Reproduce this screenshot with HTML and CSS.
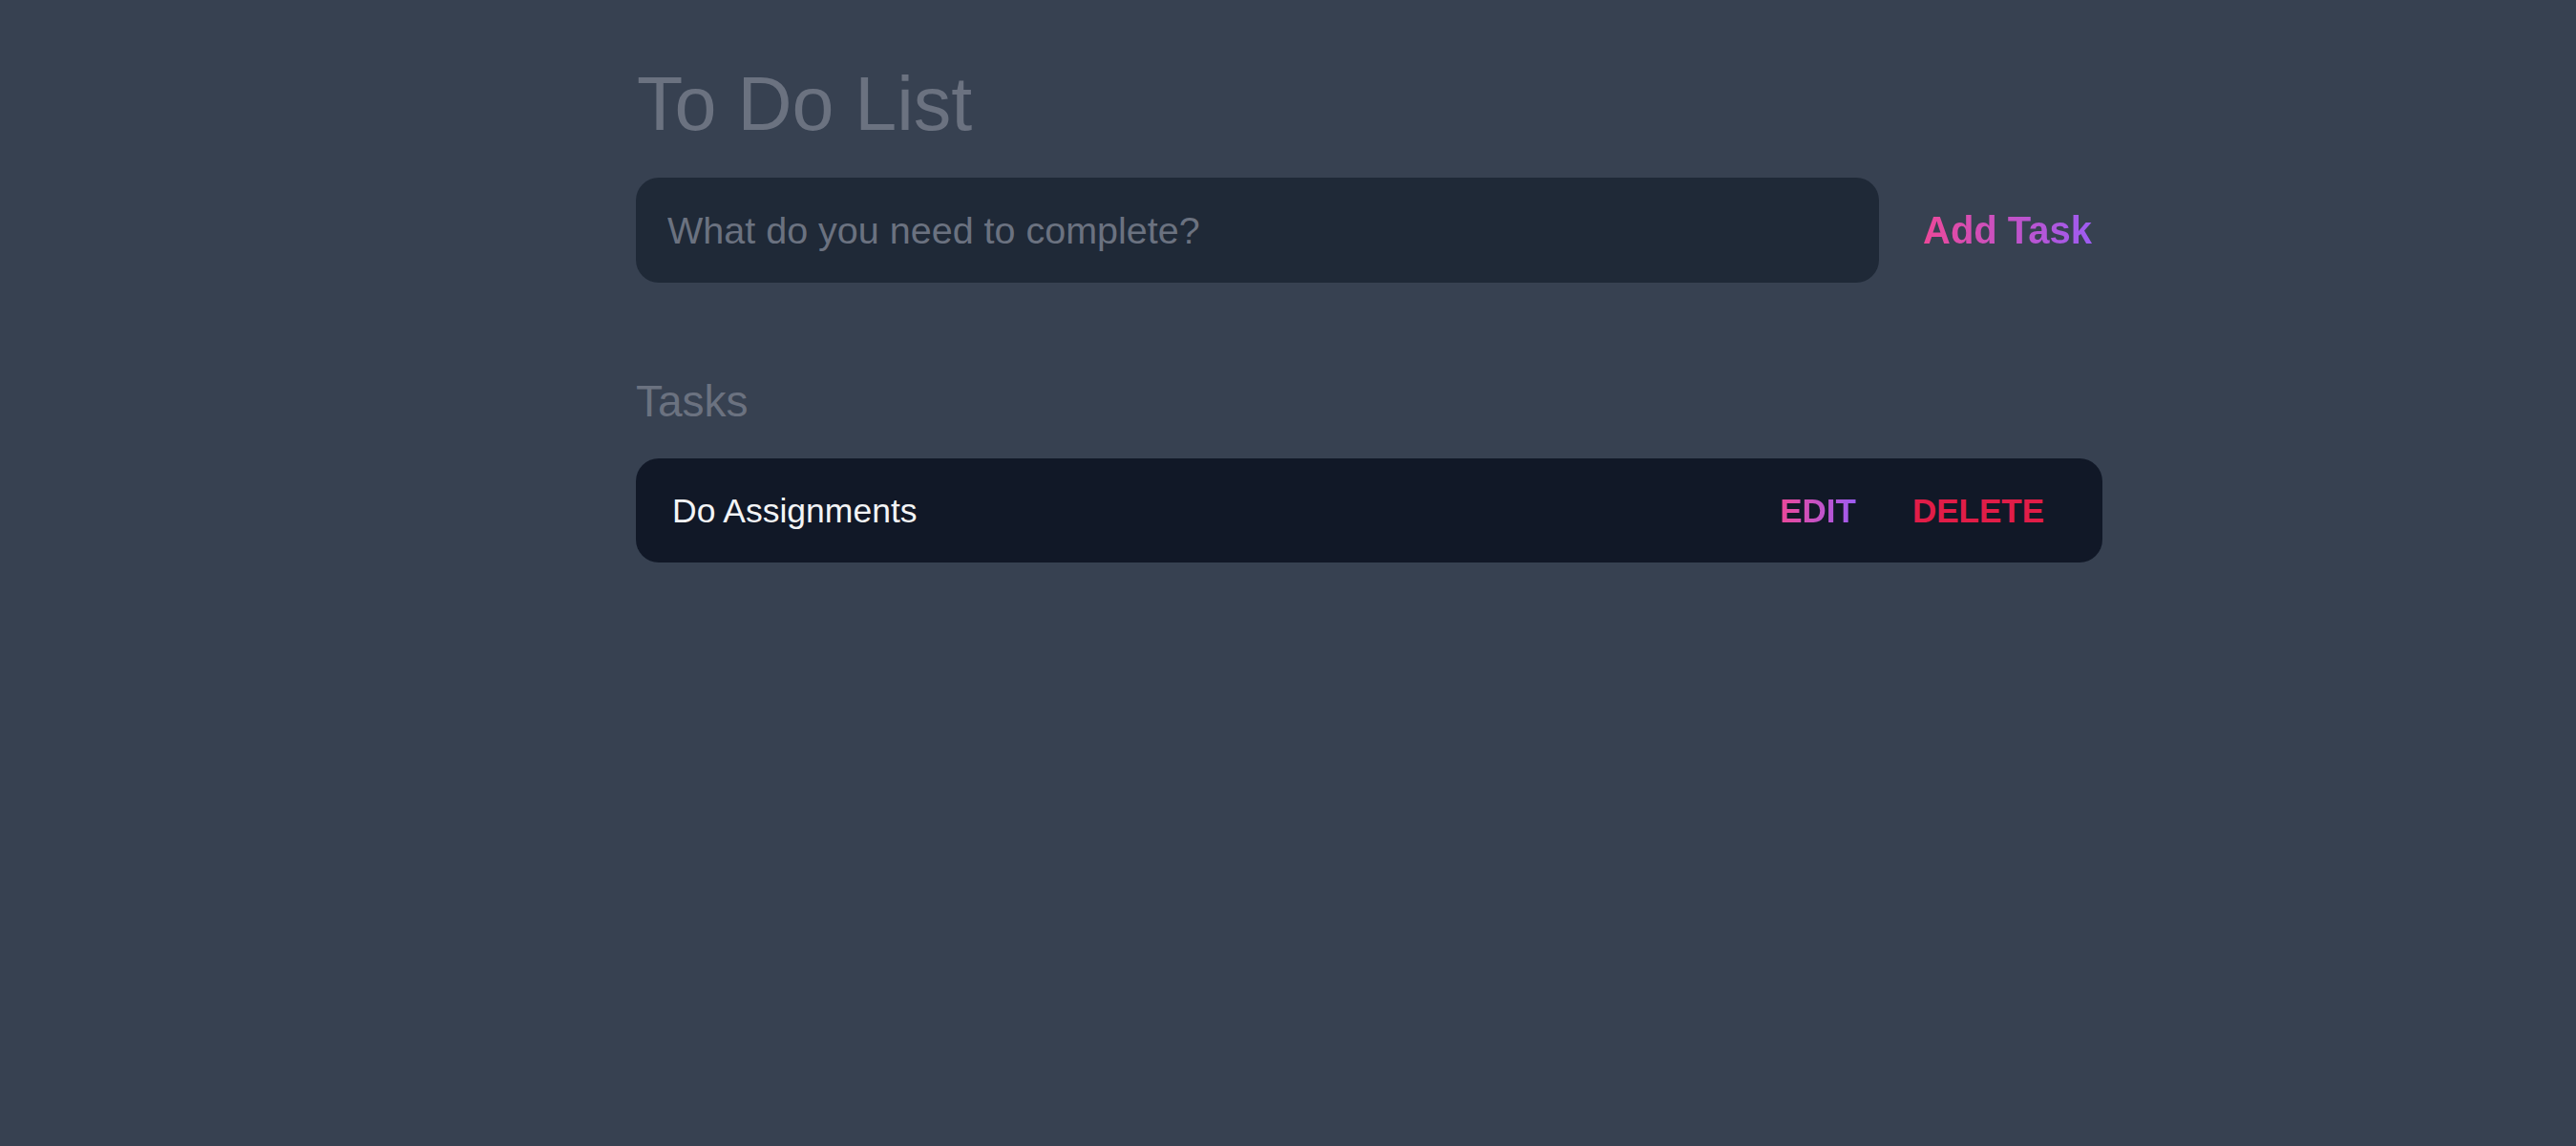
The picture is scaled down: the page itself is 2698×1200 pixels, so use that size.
FILE: index.html
```html
<!DOCTYPE html>
<html lang="en">
<head>
<meta charset="utf-8">
<title>To Do List</title>
<link rel="stylesheet" href="styles.css">
</head>
<body>
<main class="app">
  <h1 class="title">To Do List</h1>
  <form class="new-task" onsubmit="return false">
    <input class="task-input" type="text" placeholder="What do you need to complete?">
    <button class="add-btn" type="submit"><span class="grad-text">Add Task</span></button>
  </form>
  <h2 class="section-title">Tasks</h2>
  <ul class="task-list">
    <li class="task">
      <span class="task-name">Do Assignments</span>
      <div class="actions">
        <button class="action edit"><span class="grad-text">EDIT</span></button>
        <button class="action delete">DELETE</button>
      </div>
    </li>
  </ul>
</main>
</body>
</html>
```
FILE: styles.css
```css
html {
  background: #374151;
}
body {
  margin: 0;
  min-height: 1200px;
  background: #374151;
  font-family: "Liberation Sans", Arial, Helvetica, sans-serif;
}
.app {
  width: 1536px;
  margin-left: 666px;
  padding-top: 69px;
}
.title {
  margin: 0;
  font-size: 79px;
  line-height: 80px;
  font-weight: 400;
  color: #6b7280;
  padding-left: 1px;
}
.new-task {
  display: flex;
  align-items: center;
  margin-top: 37px;
}
.task-input {
  flex: none;
  width: 1302px;
  height: 110px;
  box-sizing: border-box;
  border: none;
  outline: none;
  border-radius: 24px;
  background: #1f2937;
  padding: 0 33px;
  font-family: "Liberation Sans", Arial, Helvetica, sans-serif;
  font-size: 39.5px;
  color: #e5e7eb;
}
.task-input::placeholder {
  color: #6b7280;
}
.add-btn {
  margin-left: 46px;
  padding: 0;
  border: none;
  background: none;
  font-family: "Liberation Sans", Arial, Helvetica, sans-serif;
  font-size: 40px;
  line-height: 40px;
  font-weight: 700;
  cursor: pointer;
}
.grad-text {
  background: linear-gradient(90deg, #ec4899, #9d5cf2);
  -webkit-background-clip: text;
  background-clip: text;
  color: transparent;
}
.section-title {
  margin: 101px 0 0;
  font-size: 46px;
  line-height: 46px;
  font-weight: 400;
  color: #6b7280;
}
.task-list {
  list-style: none;
  margin: 37px 0 0;
  padding: 0;
}
.task {
  display: flex;
  align-items: center;
  justify-content: space-between;
  height: 109px;
  border-radius: 24px;
  background: #111827;
  padding: 0 61px 0 38px;
}
.task-name {
  font-size: 35.5px;
  line-height: 36px;
  color: #f3f4f6;
}
.actions {
  display: flex;
  align-items: center;
  gap: 59px;
}
.action {
  padding: 0;
  border: none;
  background: none;
  font-family: "Liberation Sans", Arial, Helvetica, sans-serif;
  font-size: 35px;
  line-height: 36px;
  font-weight: 700;
  cursor: pointer;
}
.delete {
  color: #e11d48;
}
```
